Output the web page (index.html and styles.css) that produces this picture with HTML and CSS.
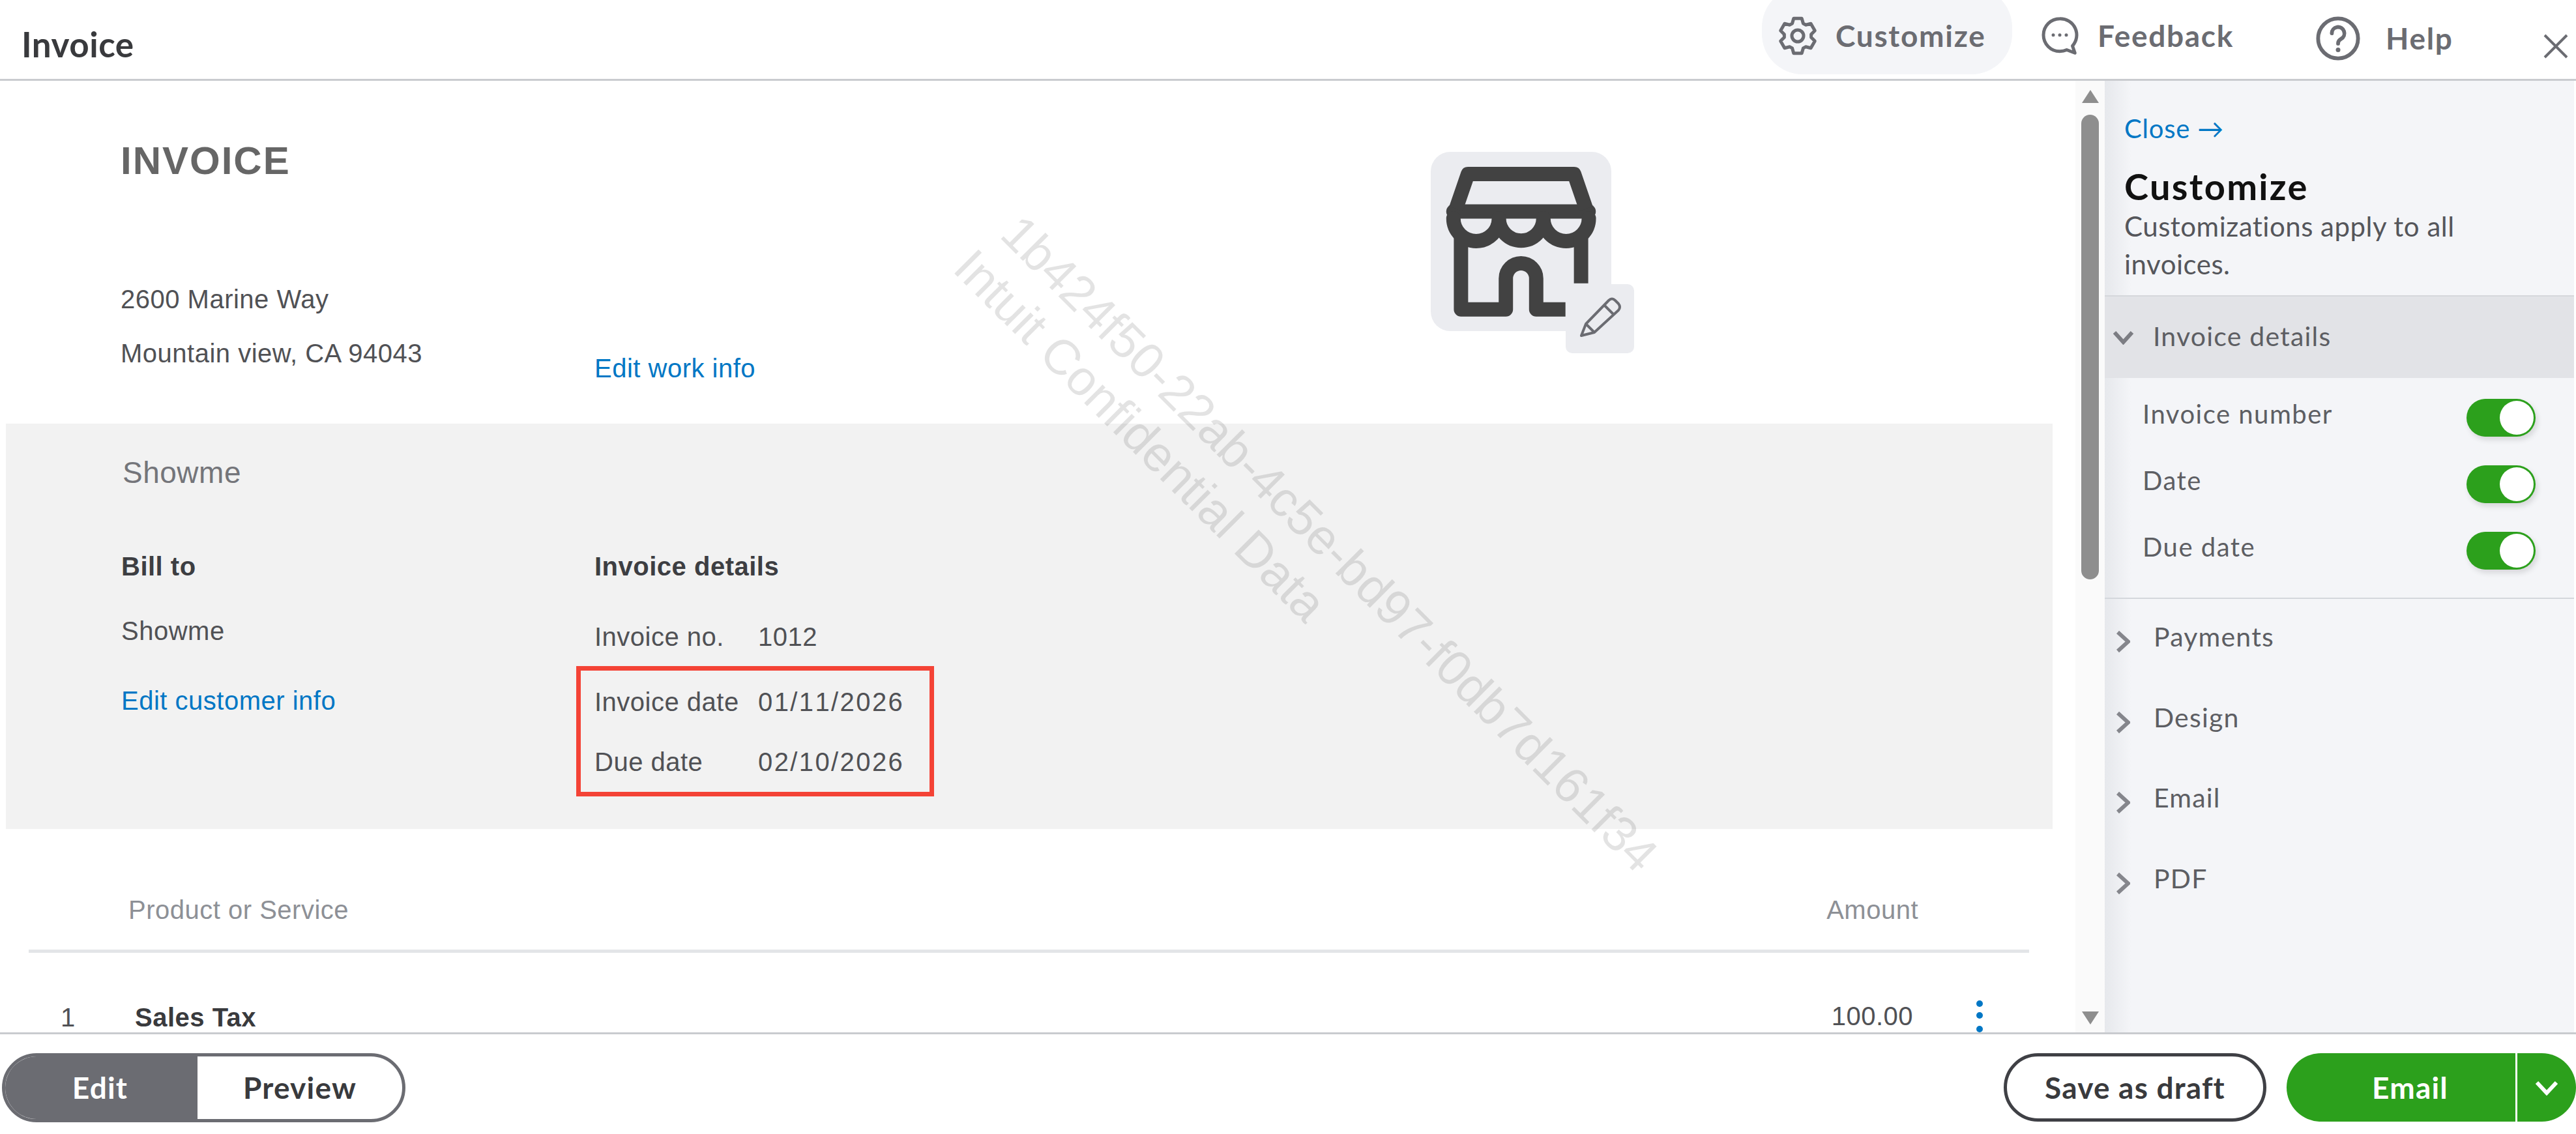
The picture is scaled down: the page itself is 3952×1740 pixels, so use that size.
FILE: index.html
```html
<!DOCTYPE html>
<html lang="en">
<head>
    <meta charset="UTF-8">
    <title>Invoice</title>
    <link rel="stylesheet" href="styles.css">
</head>
<body>
    <div class="app">
        <header class="topbar">
            <div class="topbar-title">Invoice</div>
            <div class="action action-customize">
                <svg class="icon-gear" viewBox="0 0 24 24"><path d="M8.62 4.42 9.53 1.28H14.47L15.38 4.42 16.88 5.28 20.04 4.5 22.52 8.78 20.25 11.13V12.87L22.52 15.22 20.04 19.5 16.88 18.72 15.38 19.58 14.47 22.72H9.53L8.62 19.58 7.12 18.72 3.96 19.5 1.48 15.22 3.75 12.87V11.13L1.48 8.78 3.96 4.5 7.12 5.28Z"/><circle cx="12" cy="12" r="3.6"/></svg>
                <span>Customize</span>
            </div>
            <div class="action action-feedback">
                <svg class="icon-bubble" viewBox="0 0 24 24"><path d="M12 1.5a10 10 0 1 0 0 20c1.6 0 3-.3 4.300-.9l5 1.900-1.500-4.300A10 10 0 0 0 12 1.500Z"/><circle class="dot" cx="8" cy="11.500" r="1"/><circle class="dot" cx="12" cy="11.500" r="1"/><circle class="dot" cx="16" cy="11.500" r="1"/></svg>
                <span>Feedback</span>
            </div>
            <div class="action action-help">
                <svg class="icon-help" viewBox="0 0 24 24"><circle cx="12" cy="12" r="10.500"/><path d="M8.700 9.300a3.300 3.300 0 1 1 4.900 2.900c-1.100.6-1.600 1.200-1.600 2.500"/><circle class="dot" cx="12" cy="18" r="1.200"/></svg>
                <span>Help</span>
            </div>
            <svg class="icon-close" viewBox="0 0 38 38"><path d="M2 2 36 36M36 2 2 36"/></svg>
        </header>

        <div class="workspace">
            <main class="sheet">
                <section class="sheet-head">
                    <div>
                        <h1 class="sheet-title">INVOICE</h1>
                        <p class="address">2600 Marine Way</p>
                        <p class="address">Mountain view, CA 94043</p>
                    </div>
                    <a class="link work-link">Edit work info</a>
                    <div class="logo-box">
                        <svg class="store" viewBox="45 38 830 827">
                            <path class="store-round" d="M148 313H772"/>
                            <path d="M160 300 215 140H705L760 300"/>
                            <path class="store-round" d="M148 345A105 105 0 0 0 358 345A102 102 0 0 0 563 345A105 105 0 0 0 773 345"/>
                            <path d="M183 430V765H390V622A70 70 0 0 1 530 622V765H665"/>
                            <path d="M737 430V645"/>
                        </svg>
                        <div class="pencil-box">
                            <svg class="pencil" viewBox="0 0 105 105"><path d="M24 79 31 61 66 25Q71 20 76 25L81 30Q85 35 81 40L44 74ZM31 61 44 74M59 32 74 47"/></svg>
                        </div>
                    </div>
                </section>

                <section class="bill-panel">
                    <h2 class="bill-name">Showme</h2>
                    <div class="bill-grid">
                        <div class="bill-to">
                            <div class="strong">Bill to</div>
                            <div class="customer">Showme</div>
                            <a class="link customer-link">Edit customer info</a>
                        </div>
                        <div class="details">
                            <div class="strong">Invoice details</div>
                            <div class="detail-row detail-number"><span>Invoice no.</span><span>1012</span></div>
                            <div class="date-box">
                                <div class="detail-row"><span>Invoice date</span><span class="date-value">01/11/2026</span></div>
                                <div class="detail-row"><span>Due date</span><span class="date-value">02/10/2026</span></div>
                            </div>
                        </div>
                    </div>
                </section>

                <div class="items-head"><span>Product or Service</span><span>Amount</span></div>
                <div class="items-rule"></div>
                <div class="item-row">
                    <span class="item-num">1</span>
                    <span class="item-name">Sales Tax</span>
                    <span class="item-amount">100.00</span>
                    <svg class="kebab" viewBox="0 0 12 52"><circle cx="6" cy="6" r="5"/><circle cx="6" cy="24" r="5"/><circle cx="6" cy="45" r="5"/></svg>
                </div>

                <div class="watermark">1b424f50-22ab-4c5e-bd97-f0db7d161f34<br>Intuit Confidential Data</div>
            </main>

            <div class="scrollbar">
                <div class="arrow-up"></div>
                <div class="thumb"></div>
                <div class="arrow-down"></div>
            </div>

            <aside class="panel">
                <div class="panel-top">
                    <a class="panel-close">Close →</a>
                    <h2 class="panel-title">Customize</h2>
                    <p class="panel-desc">Customizations apply to all<br>invoices.</p>
                </div>
                <div class="group-open">
                    <svg class="chev-down" viewBox="0 0 35 22"><path d="M4 3 17.500 18 31 3"/></svg>
                    <span>Invoice details</span>
                </div>
                <div class="toggles">
                    <div class="toggle-row"><span>Invoice number</span><div class="toggle"><div class="knob"></div></div></div>
                    <div class="toggle-row"><span>Date</span><div class="toggle"><div class="knob"></div></div></div>
                    <div class="toggle-row"><span>Due date</span><div class="toggle"><div class="knob"></div></div></div>
                </div>
                <div class="groups">
                    <div class="group"><svg class="chev-right" viewBox="0 0 22 35"><path d="M3 3 19 17.500 3 32"/></svg><span>Payments</span></div>
                    <div class="group"><svg class="chev-right" viewBox="0 0 22 35"><path d="M3 3 19 17.500 3 32"/></svg><span>Design</span></div>
                    <div class="group"><svg class="chev-right" viewBox="0 0 22 35"><path d="M3 3 19 17.500 3 32"/></svg><span>Email</span></div>
                    <div class="group"><svg class="chev-right" viewBox="0 0 22 35"><path d="M3 3 19 17.500 3 32"/></svg><span>PDF</span></div>
                </div>
            </aside>
        </div>

        <footer class="footer">
            <div class="mode-switch">
                <div class="mode mode-active">Edit</div>
                <div class="mode">Preview</div>
            </div>
            <button class="btn-draft">Save as draft</button>
            <div class="btn-email">
                <span class="btn-email-label">Email</span>
                <span class="btn-email-more"><svg viewBox="0 0 36 24"><path d="M3 4 18 20 33 4"/></svg></span>
            </div>
        </footer>
    </div>
</body>
</html>
```

FILE: styles.css
```css
* {
    box-sizing: border-box;
}
html,
body {
    margin: 0;
    height: 100%;
    overflow: hidden;
    background: #ffffff;
}
.app {
    display: flex;
    flex-direction: column;
    height: 1740px;
    font-family: 'Liberation Sans', Arial, sans-serif;
    font-size: 40px;
    line-height: 60px;
    letter-spacing: 0.5px;
    color: #505155;
}
h1,
h2,
p {
    margin: 0;
    font-weight: normal;
}
svg {
    display: block;
    fill: none;
}

/* top bar */
.topbar {
    display: flex;
    flex: none;
    height: 124px;
    border-bottom: 3px solid #c9cbcf;
    font-family: Lato, sans-serif;
    font-size: 46px;
    font-weight: 700;
    color: #6b6c72;
}
.topbar-title {
    flex: 1;
    padding: 38px 0 0 33px;
    font-size: 53px;
    line-height: 60px;
    font-weight: 700;
    letter-spacing: 0.5px;
    color: #393a3d;
}
.action {
    display: flex;
    letter-spacing: 1.7px;
}
.action svg {
    stroke: #6b6c72;
    stroke-width: 2;
    stroke-linejoin: round;
    stroke-linecap: round;
}
.action svg .dot {
    fill: #6b6c72;
    stroke: none;
}
.action-customize {
    align-items: center;
    gap: 28px;
    width: 384px;
    height: 134px;
    margin-top: -20px;
    padding: 16px 0 0 25px;
    border-radius: 62px;
    background: #f4f5f8;
}
.icon-gear {
    width: 60px;
    height: 60px;
}
.action-feedback {
    align-items: center;
    gap: 28px;
    width: 465px;
    height: 110px;
    padding-left: 43px;
}
.icon-bubble {
    width: 60px;
    height: 60px;
}
.action-help {
    align-items: center;
    gap: 38px;
    width: 350px;
    height: 118px;
}
.icon-help {
    width: 70px;
    height: 70px;
}
.icon-close {
    width: 38px;
    height: 38px;
    margin: 52px 12px 0 0;
    stroke: #6b6c72;
    stroke-width: 4;
}

/* main layout */
.workspace {
    display: flex;
    flex: 1;
    min-height: 0;
}
.sheet {
    position: relative;
    width: 3184px;
    overflow: hidden;
}

/* invoice head */
.sheet-head {
    display: grid;
    grid-template-columns: 727px 1283px 312px;
    height: 526px;
    padding-left: 185px;
}
.sheet-title {
    margin: 93px 0 141px;
    font-size: 60px;
    font-weight: 700;
    letter-spacing: 2px;
    color: #666666;
}
.address {
    line-height: 83px;
}
.link {
    color: #0077c5;
}
.work-link {
    align-self: end;
    padding-bottom: 43px;
    line-height: 83px;
}
.logo-box {
    position: relative;
    width: 277px;
    height: 275px;
    margin-top: 109px;
    border-radius: 30px;
    background: #ebecf0;
}
.store {
    width: 277px;
    height: 275px;
    stroke: #424242;
    stroke-width: 66;
    stroke-linejoin: round;
}
.store-round {
    stroke-linecap: round;
}
.pencil-box {
    position: absolute;
    left: 207px;
    top: 203px;
    width: 105px;
    height: 106px;
    border-radius: 10px;
    background: #ebecf0;
}
.pencil {
    width: 105px;
    height: 105px;
    stroke: #6b6c72;
    stroke-width: 4;
    stroke-linejoin: round;
}

/* grey bill block */
.bill-panel {
    height: 622px;
    margin: 0 35px 0 9px;
    padding: 45px 0 0 177px;
    background: #f2f2f2;
}
.bill-name {
    margin-left: 2px;
    font-size: 46px;
    color: #74757a;
}
.bill-grid {
    display: grid;
    grid-template-columns: 726px 1fr;
    margin-top: 84px;
}
.strong {
    font-weight: 700;
    color: #3d3e42;
}
.customer {
    margin-top: 39px;
}
.customer-link {
    display: block;
    margin-top: 47px;
}
.detail-row {
    display: grid;
    grid-template-columns: 251px 1fr;
}
.date-value {
    font-kerning: none;
    letter-spacing: 2.4px;
}
.detail-number {
    margin-top: 48px;
}
.date-box {
    display: flex;
    flex-direction: column;
    gap: 32px;
    width: 549px;
    margin: 15px 0 0 -28px;
    padding: 18px 0 16px 21px;
    border: 7px solid #f44336;
}

/* line items */
.items-head {
    display: flex;
    justify-content: space-between;
    padding: 94px 241px 0 197px;
    color: #8d9096;
}
.items-rule {
    width: 3069px;
    height: 5px;
    margin: 31px 0 0 44px;
    background: #e3e5e8;
}
.item-row {
    display: flex;
    margin-top: 69px;
    padding-left: 93px;
}
.item-num {
    width: 114px;
}
.item-name {
    flex: 1;
    font-weight: 700;
    color: #393a3d;
}
.item-amount {
    margin-top: -2px;
}
.kebab {
    flex: none;
    width: 12px;
    height: 52px;
    margin: 3px 141px 0 96px;
    fill: #0077c5;
}
.watermark {
    position: absolute;
    left: 1571px;
    top: 179px;
    font-size: 76px;
    line-height: 88px;
    letter-spacing: 0;
    text-indent: 14px;
    white-space: nowrap;
    color: rgba(0, 0, 0, 0.11);
    transform: rotate(45deg);
    transform-origin: 0 0;
    pointer-events: none;
}

/* scrollbar */
.scrollbar {
    display: flex;
    flex: none;
    flex-direction: column;
    align-items: center;
    width: 45px;
    padding: 14px 0 12px;
    background: #fafafa;
}
.arrow-up,
.arrow-down {
    width: 0;
    height: 0;
    border-left: 13px solid transparent;
    border-right: 13px solid transparent;
}
.arrow-up {
    border-bottom: 20px solid #8e8e8e;
}
.arrow-down {
    margin-top: auto;
    border-top: 20px solid #8e8e8e;
}
.thumb {
    width: 27px;
    height: 713px;
    margin-top: 18px;
    border-radius: 14px;
    background: #8e8e8e;
}

/* customize panel */
.panel {
    flex: 1;
    border-right: 3px solid #ffffff;
    background: linear-gradient(to right, #e6e8ec, #f4f5f8 40px);
    font-family: Lato, sans-serif;
    letter-spacing: 1.5px;
    color: #5d5e63;
}
.panel-top {
    padding: 48px 0 19px 30px;
}
.panel-close {
    display: block;
    font-size: 40px;
    line-height: 50px;
    letter-spacing: 0.8px;
    color: #0077c5;
}
.panel-title {
    margin-top: 30px;
    font-size: 56px;
    line-height: 68px;
    font-weight: 700;
    letter-spacing: 2.3px;
    color: #111111;
}
.panel-desc {
    margin-top: -2px;
    font-size: 42px;
    line-height: 58px;
    letter-spacing: 0.5px;
    color: #55565b;
}
.group-open {
    display: flex;
    align-items: center;
    gap: 28px;
    height: 127px;
    padding: 0 0 3px 11px;
    border-top: 2px solid #d5d7db;
    background: #e2e3e7;
    font-size: 41px;
    letter-spacing: 1.2px;
}
.chev-down {
    width: 35px;
    height: 22px;
    margin-top: 4px;
    stroke: #7c7d83;
    stroke-width: 6;
}
.toggles {
    margin-bottom: 21px;
    padding: 10px 59px 0 58px;
}
.toggle-row {
    display: flex;
    align-items: center;
    justify-content: space-between;
    height: 102px;
}
.toggle-row span {
    margin-bottom: 12px;
}
.toggle {
    display: flex;
    justify-content: flex-end;
    align-items: center;
    width: 106px;
    height: 58px;
    padding-right: 3px;
    border-radius: 29px;
    background: #2ca01c;
    box-shadow: 3px 5px 8px rgba(0, 0, 0, 0.12);
}
.knob {
    width: 52px;
    height: 52px;
    border-radius: 50%;
    background: #ffffff;
}
.groups {
    padding-top: 28px;
    border-top: 2px solid #d4d7dc;
    font-size: 41px;
    letter-spacing: 1.2px;
}
.group {
    display: flex;
    gap: 36px;
    height: 123.7px;
    padding-left: 17px;
}
.chev-right {
    width: 22px;
    height: 35px;
    margin-top: 20px;
    stroke: #85868c;
    stroke-width: 6;
}

/* footer */
.footer {
    display: flex;
    flex: none;
    align-items: flex-start;
    height: 156px;
    padding: 29px 0 0 3px;
    border-top: 3px solid #c9cbcf;
    font-family: Lato, sans-serif;
    font-size: 46px;
    line-height: 60px;
    font-weight: 700;
    letter-spacing: 1.2px;
    color: #393a3d;
}
.mode-switch {
    display: flex;
    width: 619px;
    height: 106px;
    overflow: hidden;
    border: 5px solid #6b6c72;
    border-radius: 53px;
}
.mode {
    display: flex;
    flex: 1;
    align-items: center;
    justify-content: center;
}
.mode-active {
    flex: none;
    width: 295px;
    padding-right: 4px;
    background: #6b6c72;
    color: #ffffff;
}
.btn-draft {
    width: 403px;
    height: 105px;
    margin-left: auto;
    border: 5px solid #3f4045;
    border-radius: 53px;
    background: #ffffff;
    font: inherit;
    letter-spacing: inherit;
    color: inherit;
}
.btn-email {
    display: flex;
    width: 444px;
    height: 105px;
    margin-left: 31px;
    border-radius: 53px;
    background: #2ca01c;
    color: #ffffff;
}
.btn-email-label {
    display: flex;
    align-items: center;
    justify-content: center;
    width: 354px;
    padding-left: 28px;
    border-right: 3px solid #ffffff;
}
.btn-email-more {
    display: flex;
    flex: 1;
    align-items: center;
    justify-content: center;
}
.btn-email-more svg {
    width: 36px;
    height: 24px;
    stroke: #ffffff;
    stroke-width: 6;
}
```
